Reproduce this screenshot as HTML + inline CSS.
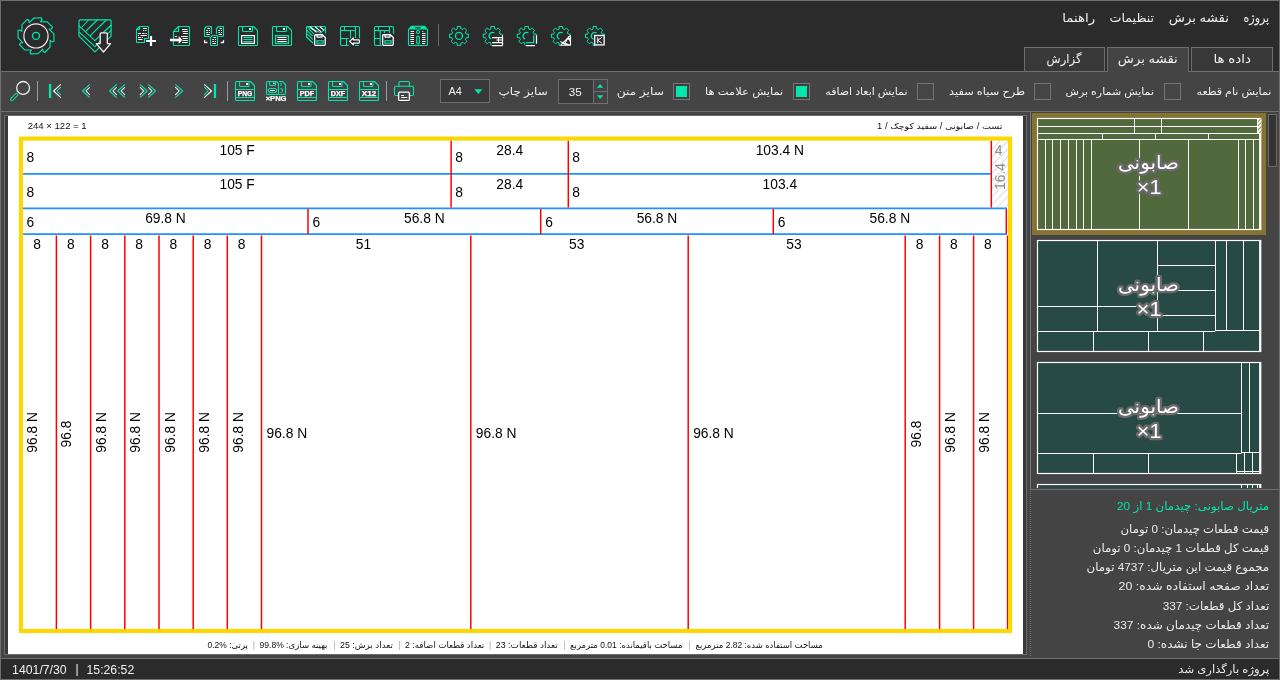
<!DOCTYPE html><html lang="fa" dir="ltr"><head><meta charset="utf-8"><title>نقشه برش</title><style>
*{box-sizing:border-box;margin:0;padding:0}
html,body{width:1280px;height:680px;overflow:hidden;background:#444444;}
body{position:relative;font-family:"Liberation Sans","DejaVu Sans",sans-serif;color:#eee;}
.abs{position:absolute}
svg{position:absolute;left:0;top:0;overflow:hidden;will-change:transform}
svg text{font-family:"Liberation Sans","DejaVu Sans",sans-serif}
#topbar{left:0;top:0;width:1280px;height:72px;background:#2b2b2b;border-bottom:1px solid #6f6f6f}
#toolbar{left:0;top:72px;width:1280px;height:40px;background:#444444;border-bottom:1px solid #6f6f6f}
#status{left:0;top:658px;width:1280px;height:22px;background:#2b2b2b;border-top:1px solid #6f6f6f}
#frame{left:0;top:0;width:1280px;height:680px;border:1px solid #6f6f6f;pointer-events:none;z-index:50}
.tab{top:47px;height:24px;border:1px solid #6f6f6f;border-bottom:none;background:#383838}
.tab.on{background:#444444;height:25px}
.cb{top:83px;width:17px;height:17px;border:1px solid #757575;background:#454545}
.cb.on{background:#3f3f3f}
.cb.on::after{content:"";position:absolute;left:2px;top:2px;width:11px;height:11px;background:#02e6ac}
.sep{width:1px;background:#9a9a9a}
.box{border:1px solid #6e6e6e;background:#393939}
#canvas{left:4px;top:115px;width:1023px;height:540px;background:#383838;border:1px solid #6a6a6a}
#white{left:8px;top:116px;width:1015px;height:538px;background:#fff}
#info{left:1031px;top:489px;width:249px;height:169px;background:#444444;border-top:1px solid #6f6f6f}
#split{left:1030px;top:489px;width:1px;height:167px;border-left:1px dotted #727272}
#split2{left:1030px;top:112px;width:1px;height:378px;background:#7c7c7c}
</style></head><body>
<div id="topbar" class="abs"></div>
<div id="toolbar" class="abs"></div>
<div class="abs tab" style="left:1191px;width:82px"></div>
<div class="abs tab on" style="left:1107px;width:82px"></div>
<div class="abs tab" style="left:1024px;width:81px"></div>
<div class="abs cb on" style="left:673px"></div>
<div class="abs cb on" style="left:793px"></div>
<div class="abs cb" style="left:917px"></div>
<div class="abs cb" style="left:1034px"></div>
<div class="abs cb" style="left:1164px"></div>
<div class="abs sep" style="left:37px;top:81px;height:20px"></div>
<div class="abs sep" style="left:227px;top:81px;height:20px"></div>
<div class="abs sep" style="left:386px;top:81px;height:20px"></div>
<div class="abs sep" style="left:438px;top:24px;height:22px;background:#6a6a6a"></div>
<div class="abs box" style="left:440px;top:79px;width:50px;height:24px"></div>
<svg style="left:474px;top:89px" width="9" height="6"><path d="M0.3 0.3h8L4.3 5z" fill="#02e6ac"/></svg>
<div class="abs box" style="left:558px;top:79px;width:50px;height:25px"></div>
<div class="abs" style="left:593px;top:80px;width:14px;height:23px;background:#444444;border-left:1px solid #6e6e6e"></div>
<div class="abs" style="left:593px;top:91px;width:14px;height:1px;background:#6e6e6e"></div>
<svg style="left:596px;top:83px" width="8" height="17"><path d="M1 4.8h6.2L4.1 1z M1 12.2h6.2L4.1 16z" fill="#02e6ac"/></svg>
<svg width="640" height="110" viewBox="0 0 640 110"><path d="M40.5 21.8 L47.3 21.9 L52.6 27.1 L51.6 28.7 L49.2 29.1 L53.9 33.9 L54.0 41.5 L52.1 41.8 L50.1 40.4 L50.0 47.2 L44.8 52.5 L43.2 51.5 L42.8 49.1 L38.0 53.8 L30.4 53.9 L30.1 52.0 L31.5 50.0 L24.7 49.9 L19.4 44.7 L20.4 43.1 L22.8 42.7 L18.1 37.9 L18.0 30.3 L19.9 30.0 L21.9 31.4 L22.0 24.6 L27.2 19.3 L28.8 20.3 L29.2 22.7 L34.0 18.0 L41.6 17.9 L41.9 19.8Z" stroke="#02e6ac" stroke-width="1.15" fill="none" stroke-linejoin="round" stroke-linecap="round" /><circle cx="36" cy="35.9" r="12.1" fill="none" stroke="#f6e8e8" stroke-width="1.2"/><circle cx="36" cy="35.9" r="3.5" fill="none" stroke="#02e6ac" stroke-width="1.4"/><path d="M80 19.9H110.1Q111.1 19.9 111.1 20.9V36.2L94.9 51.8L79 36.2V20.9Q79 19.9 80 19.9Z" stroke="#02e6ac" stroke-width="1.15" fill="none" stroke-linejoin="round" stroke-linecap="round" /><path d="M79 25.9L94.9 40.6L111.1 25.1" stroke="#02e6ac" stroke-width="1.1" fill="none" stroke-linejoin="round" stroke-linecap="round" /><path d="M79 31.8L94.9 46.7L111.1 30.3" stroke="#02e6ac" stroke-width="1.1" fill="none" stroke-linejoin="round" stroke-linecap="round" /><path d="M82 27L88.5 20 M86 31L97.2 20 M90.5 35.3L106.3 20 M103.7 32.2L111 25.3" stroke="#02e6ac" stroke-width="1.1" fill="none" stroke-linejoin="round" stroke-linecap="round" /><path d="M100.2 43.6V33.9Q100.2 32.9 101.2 32.9H106.3Q107.3 32.9 107.3 33.9V43.6H110.6L103.5 52L96.3 43.6Z" stroke="#f4f0f0" stroke-width="1.3" fill="#2b2b2b" stroke-linejoin="round" stroke-linecap="round" /><g transform="translate(136 26)"><path d="M3.5 0.5H11.9Q12.5 0.5 12.5 1.1V12.5H8.5V16.5H1.1Q0.5 16.5 0.5 15.9V3.5Z M3.5 0.5V3.5H0.5" stroke="#02e6ac" stroke-width="1.1" fill="none" stroke-linejoin="round" stroke-linecap="round" /><path d="M7 2.5H11 M7 4.5H8.3 M9.3 4.5H10.6 M2 7.5H5 M6 7.5H8.6 M9.5 7.5H10.8 M2 9.5H3 M4.6 9.5H10.8 M2 11.5H5 M6 11.5H7 M2 13.5H6.5" stroke="#f4f0f0" stroke-width="1.1" fill="none"/><path d="M15 10V20M10 15H20" stroke="#fff" stroke-width="2.2" fill="none"/></g><g transform="translate(170 26)"><path d="M8.5 0.5H18.9Q19.5 0.5 19.5 1.1V18.9Q19.5 19.5 18.9 19.5H4.1Q3.5 19.5 3.5 18.9V5.5Z M8.5 0.5V5.5H3.5" stroke="#02e6ac" stroke-width="1.1" fill="none" stroke-linejoin="round" stroke-linecap="round" /><path d="M12 3.5H17.5 M12.5 5.5H17.8 M13 7.5H17.8 M4.8 10.5H7 M11 10.5H17.8 M12.5 12.5H17.8 M12.5 14.5H17.8 M12 16.5H17.8" stroke="#f4f0f0" stroke-width="1.1" fill="none"/><path d="M0 12.8H8.6V10.4H9.2L12.2 14L9.2 17.6H8.6V15.2H0Z" fill="#fff"/></g><g transform="translate(204 26)"><path d="M2.5 0.5H6.9Q7.5 0.5 7.5 1.1V9.9Q7.5 10.5 6.9 10.5H1.1Q0.5 10.5 0.5 9.9V2.5Z" stroke="#02e6ac" stroke-width="1.1" fill="none" stroke-linejoin="round" stroke-linecap="round" /><path d="M3.5 2.5H5.9 M2.3 4.5H4.0 M4.8 4.5H6.0 M2.3 6.5H4.0 M4.8 6.5H6.0 M2.3 8.5H6.0" stroke="#f4f0f0" stroke-width="1.1" fill="none"/><path d="M14.5 0.5H18.9Q19.5 0.5 19.5 1.1V9.9Q19.5 10.5 18.9 10.5H13.1Q12.5 10.5 12.5 9.9V2.5Z" stroke="#02e6ac" stroke-width="1.1" fill="none" stroke-linejoin="round" stroke-linecap="round" /><path d="M15.5 2.5H17.9 M14.3 4.5H16.0 M16.8 4.5H18.0 M14.3 6.5H16.0 M16.8 6.5H18.0 M14.3 8.5H18.0" stroke="#f4f0f0" stroke-width="1.1" fill="none"/><rect x="5.8" y="8.2" width="8.6" height="11.8" fill="#2b2b2b"/><path d="M8.5 9.5H12.9Q13.5 9.5 13.5 10.1V18.9Q13.5 19.5 12.9 19.5H7.1Q6.5 19.5 6.5 18.9V11.5Z" stroke="#02e6ac" stroke-width="1.1" fill="none" stroke-linejoin="round" stroke-linecap="round" /><path d="M9.5 11.5H11.9 M8.3 13.5H10.0 M10.8 13.5H12.0 M8.3 15.5H10.0 M10.8 15.5H12.0 M8.3 17.5H12.0" stroke="#f4f0f0" stroke-width="1.1" fill="none"/><path d="M0.6 14.2V16.5H3.4 M19.5 14.2V16.5H16.7" stroke="#fff" stroke-width="1.3" fill="none" stroke-linejoin="round" stroke-linecap="butt" /></g><g transform="translate(238 26)"><path d="M1.5 0.5H15.5L19.5 4.5V18.5Q19.5 19.5 18.5 19.5H1.5Q0.5 19.5 0.5 18.5V1.5Q0.5 0.5 1.5 0.5Z" stroke="#02e6ac" stroke-width="1.1" fill="none" stroke-linejoin="round" stroke-linecap="round" /><path d="M4.5 0.5V4.5Q4.5 5.5 5.5 5.5H13.5Q14.5 5.5 14.5 4.5V0.5" stroke="#02e6ac" stroke-width="1.1" fill="none" stroke-linejoin="round" stroke-linecap="round" /><rect x="11" y="2" width="2" height="2" fill="#fff"/><rect x="3.6" y="9.6" width="12.8" height="7.7" fill="none" stroke="#fff" stroke-width="1.25"/><path d="M5.4 11.5H14.6 M5.4 13.5H14.6 M5.4 15.5H14.6" stroke="#02e6ac" stroke-width="1.05" fill="none"/></g><g transform="translate(272 26)"><path d="M1.5 0.5H15.5L19.5 4.5V18.5Q19.5 19.5 18.5 19.5H1.5Q0.5 19.5 0.5 18.5V1.5Q0.5 0.5 1.5 0.5Z" stroke="#02e6ac" stroke-width="1.1" fill="none" stroke-linejoin="round" stroke-linecap="round" /><path d="M4.5 0.5V4.5Q4.5 5.5 5.5 5.5H13.5Q14.5 5.5 14.5 4.5V0.5" stroke="#02e6ac" stroke-width="1.1" fill="none" stroke-linejoin="round" stroke-linecap="round" /><rect x="11" y="2" width="2" height="2" fill="#fff"/><rect x="3.6" y="9.6" width="12.8" height="7.7" fill="none" stroke="#02e6ac" stroke-width="1.25"/><path d="M5.4 11.5H14.6 M5.4 13.5H14.6 M5.4 15.5H14.6" stroke="#fff" stroke-width="1.05" fill="none"/></g><g transform="translate(306 26)"><path d="M1.5 0.5H18.5Q19.5 0.5 19.5 1.5V7 M0.5 1.5V11L7 17 M0.5 1.5Q0.5 0.5 1.5 0.5" stroke="#02e6ac" stroke-width="1.1" fill="none" stroke-linejoin="round" stroke-linecap="round" /><path d="M0.8 0.8L15 7L19.2 2.8" stroke="#02e6ac" stroke-width="1.05" fill="none" stroke-linejoin="round" stroke-linecap="round" /><path d="M4.5 1L10.3 6 M9.4 1L14.8 5.6 M14.2 1L17.5 3.9" stroke="#fff" stroke-width="1.15" fill="none" stroke-linejoin="round" stroke-linecap="round" /><path d="M0.8 4.3L6.5 9.8 M0.8 7.6L6.5 13.1 M3 3.2L7.7 7.6" stroke="#02e6ac" stroke-width="1.05" fill="none" stroke-linejoin="round" stroke-linecap="round" /><path d="M9.65 8.75H16.45L19.25 11.55V18.35Q19.25 19.35 18.25 19.35H9.65Q8.65 19.35 8.65 18.35V9.75Q8.65 8.75 9.65 8.75Z" stroke="#fff" stroke-width="1.3" fill="#2b2b2b" stroke-linejoin="round" stroke-linecap="round" /><path d="M11.05 8.75V11.05H16.05V8.75" stroke="#fff" stroke-width="1.2" fill="none" stroke-linejoin="round" stroke-linecap="round" /><rect x="10.850000000000001" y="14.75" width="6.3" height="2.4" fill="none" stroke="#02e6ac" stroke-width="1.15"/></g><g transform="translate(340 26)"><path d="M2 0.5H18Q19.5 0.5 19.5 2V18Q19.5 19.5 18 19.5H2Q0.5 19.5 0.5 18V2Q0.5 0.5 2 0.5Z" stroke="#02e6ac" stroke-width="1.1" fill="none" stroke-linejoin="round" stroke-linecap="round" /><path d="M0.5 4.5H15.5 M4.5 0.5V4.5 M15.5 0.5V11.5 M0.5 12.5H10.5 M10.5 4.5V12.5 M6.5 12.5V19.5" stroke="#02e6ac" stroke-width="1.1" fill="none" stroke-linejoin="round" stroke-linecap="round" /><rect x="8.6" y="12.2" width="12" height="8.2" fill="#2b2b2b"/><path d="M15.3 19.5H18.6" stroke="#02e6ac" stroke-width="1.1" fill="none" stroke-linejoin="round" stroke-linecap="round" /><path d="M9.7 15.4L13.3 11.9V13.8H18.6Q19.4 13.8 19.4 14.6V16.2Q19.4 17 18.6 17H13.3V18.9Z" stroke="#fff" stroke-width="1.25" fill="#2b2b2b" stroke-linejoin="round" stroke-linecap="round" /></g><g transform="translate(374 26)"><path d="M2 0.5H18Q19.5 0.5 19.5 2V18Q19.5 19.5 18 19.5H2Q0.5 19.5 0.5 18V2Q0.5 0.5 2 0.5Z" stroke="#02e6ac" stroke-width="1.1" fill="none" stroke-linejoin="round" stroke-linecap="round" /><path d="M0.5 4.5H15.5 M4.5 0.5V4.5 M15.5 0.5V6.6 M0.5 12.5H6.3 M10.4 4.5V6.6 M6.3 4.5V19.5" stroke="#02e6ac" stroke-width="1.1" fill="none" stroke-linejoin="round" stroke-linecap="round" /><rect x="7.8" y="7.9" width="13" height="13" fill="#2b2b2b"/><path d="M9.65 8.75H16.45L19.25 11.55V18.35Q19.25 19.35 18.25 19.35H9.65Q8.65 19.35 8.65 18.35V9.75Q8.65 8.75 9.65 8.75Z" stroke="#fff" stroke-width="1.3" fill="#2b2b2b" stroke-linejoin="round" stroke-linecap="round" /><path d="M11.05 8.75V11.05H16.05V8.75" stroke="#fff" stroke-width="1.2" fill="none" stroke-linejoin="round" stroke-linecap="round" /><rect x="10.850000000000001" y="14.75" width="6.3" height="2.4" fill="none" stroke="#02e6ac" stroke-width="1.15"/></g><g transform="translate(408 26)"><path d="M3.4 0.2H16.6L19.5 3.5V18.4Q19.5 19.5 18.4 19.5H1.6Q0.5 19.5 0.5 18.4V3.5Z" stroke="#02e6ac" stroke-width="1.1" fill="none" stroke-linejoin="round" stroke-linecap="round" /><path d="M3.4 0.2H16.6L19.5 3.5H0.5Z" fill="#02e6ac"/><rect x="7" y="1.2" width="6" height="1.3" rx="0.65" fill="#2b2b2b"/><path d="M2.6 5.5H6 M2.3 7.5H6 M2.3 9.5H6 M2.3 11.5H6 M2.3 13.5H6 M2.3 15.5H6 M2.8 17.5H6 M14.3 5.5H15.3 M14 7.5H17.6 M14 9.5H17.6 M14 11.5H17.6 M14 13.5H17.6 M14 15.5H17.6 M14 17.5H17.2" stroke="#f4f0f0" stroke-width="1.1" fill="none"/><circle cx="10" cy="6" r="1.5" fill="none" stroke="#02e6ac" stroke-width="1.15"/><rect x="8.7" y="10.1" width="2.6" height="7.8" rx="1.3" fill="none" stroke="#02e6ac" stroke-width="1.15"/></g><g transform="translate(449 26)"><path d="M8.21 2.72 L8.17 0.48 L11.83 0.48 L11.79 2.72 L13.81 3.56 L15.37 1.94 L17.96 4.53 L16.34 6.09 L17.18 8.11 L19.42 8.07 L19.42 11.73 L17.18 11.69 L16.34 13.71 L17.96 15.27 L15.37 17.86 L13.81 16.24 L11.79 17.08 L11.83 19.32 L8.17 19.32 L8.21 17.08 L6.19 16.24 L4.63 17.86 L2.04 15.27 L3.66 13.71 L2.82 11.69 L0.58 11.73 L0.58 8.07 L2.82 8.11 L3.66 6.09 L2.04 4.53 L4.63 1.94 L6.19 3.56Z" stroke="#02e6ac" stroke-width="1.0" fill="none" stroke-linejoin="round" stroke-linecap="round" /><circle cx="10" cy="9.9" r="3.5" fill="none" stroke="#02e6ac" stroke-width="1.3"/></g><g transform="translate(483 26)"><path d="M7.91 2.72 L7.87 0.48 L11.53 0.48 L11.49 2.72 L13.51 3.56 L15.07 1.94 L17.66 4.53 L16.04 6.09 L16.88 8.11 L19.12 8.07 L19.12 11.73 L16.88 11.69 L16.04 13.71 L17.66 15.27 L15.07 17.86 L13.51 16.24 L11.49 17.08 L11.53 19.32 L7.87 19.32 L7.91 17.08 L5.89 16.24 L4.33 17.86 L1.74 15.27 L3.36 13.71 L2.52 11.69 L0.28 11.73 L0.28 8.07 L2.52 8.11 L3.36 6.09 L1.74 4.53 L4.33 1.94 L5.89 3.56Z" stroke="#02e6ac" stroke-width="1.0" fill="none" stroke-linejoin="round" stroke-linecap="round" /><path d="M7.69 12.77A3.5 3.5 0 0 1 10.90 6.61" stroke="#02e6ac" stroke-width="1.3" fill="none" stroke-linejoin="round" stroke-linecap="round" /><rect x="8.8" y="9" width="11.5" height="11.5" fill="#2b2b2b"/><path d="M9 11.5H20 M9 16.5H20 M9 19.5H19.5 M19.5 9.3V19.5" stroke="#fff" stroke-width="1.25" fill="none" stroke-linejoin="round" stroke-linecap="butt" /><path d="M15.5 11.5V16.5 M13.3 14H19.5" stroke="#fff" stroke-width="1.0" fill="none" stroke-linejoin="round" stroke-linecap="butt" /></g><g transform="translate(517 26)"><path d="M7.91 2.72 L7.87 0.48 L11.53 0.48 L11.49 2.72 L13.51 3.56 L15.07 1.94 L17.66 4.53 L16.04 6.09 L16.88 8.11 L19.12 8.07 L19.12 11.73 L16.88 11.69 L16.04 13.71 L17.66 15.27 L15.07 17.86 L13.51 16.24 L11.49 17.08 L11.53 19.32 L7.87 19.32 L7.91 17.08 L5.89 16.24 L4.33 17.86 L1.74 15.27 L3.36 13.71 L2.52 11.69 L0.28 11.73 L0.28 8.07 L2.52 8.11 L3.36 6.09 L1.74 4.53 L4.33 1.94 L5.89 3.56Z" stroke="#02e6ac" stroke-width="1.0" fill="none" stroke-linejoin="round" stroke-linecap="round" /><path d="M7.69 12.77A3.5 3.5 0 0 1 10.90 6.61" stroke="#02e6ac" stroke-width="1.3" fill="none" stroke-linejoin="round" stroke-linecap="round" /><rect x="8.6" y="9" width="12.5" height="11.5" fill="#2b2b2b"/><path d="M9 16.5H16.75V9.3" stroke="#02e6ac" stroke-width="1.25" fill="none" stroke-linejoin="miter" stroke-linecap="butt" /><path d="M9 19.5H18 M19.5 9.3V17.8" stroke="#fff" stroke-width="1.25" fill="none" stroke-linejoin="round" stroke-linecap="butt" /></g><g transform="translate(551 26)"><path d="M8.11 2.72 L8.07 0.48 L11.73 0.48 L11.69 2.72 L13.71 3.56 L15.27 1.94 L17.86 4.53 L16.24 6.09 L17.08 8.11 L19.32 8.07 L19.32 11.73 L17.08 11.69 L16.24 13.71 L17.86 15.27 L15.27 17.86 L13.71 16.24 L11.69 17.08 L11.73 19.32 L8.07 19.32 L8.11 17.08 L6.09 16.24 L4.53 17.86 L1.94 15.27 L3.56 13.71 L2.72 11.69 L0.48 11.73 L0.48 8.07 L2.72 8.11 L3.56 6.09 L1.94 4.53 L4.53 1.94 L6.09 3.56Z" stroke="#02e6ac" stroke-width="1.0" fill="none" stroke-linejoin="round" stroke-linecap="round" /><path d="M7.89 12.77A3.5 3.5 0 0 1 11.10 6.61" stroke="#02e6ac" stroke-width="1.3" fill="none" stroke-linejoin="round" stroke-linecap="round" /><path d="M9 20.3V15L19.4 8.4H20.4V20.3Z" fill="#2b2b2b"/><path d="M9.6 19.2H19.5V9.3L9.6 19.2 M9.6 15.8L19.5 19.2 M13 19.2L17.5 10.8L19.5 16 M15.5 13L19.5 13.5 M11.5 17L17 19" stroke="#fff" stroke-width="1.1" fill="none" stroke-linejoin="round" stroke-linecap="round" /></g><g transform="translate(585 26)"><path d="M8.11 2.72 L8.07 0.48 L11.73 0.48 L11.69 2.72 L13.71 3.56 L15.27 1.94 L17.86 4.53 L16.24 6.09 L17.08 8.11 L19.32 8.07 L19.32 11.73 L17.08 11.69 L16.24 13.71 L17.86 15.27 L15.27 17.86 L13.71 16.24 L11.69 17.08 L11.73 19.32 L8.07 19.32 L8.11 17.08 L6.09 16.24 L4.53 17.86 L1.94 15.27 L3.56 13.71 L2.72 11.69 L0.48 11.73 L0.48 8.07 L2.72 8.11 L3.56 6.09 L1.94 4.53 L4.53 1.94 L6.09 3.56Z" stroke="#02e6ac" stroke-width="1.0" fill="none" stroke-linejoin="round" stroke-linecap="round" /><path d="M7.89 12.77A3.5 3.5 0 0 1 11.10 6.61" stroke="#02e6ac" stroke-width="1.3" fill="none" stroke-linejoin="round" stroke-linecap="round" /><rect x="9.7" y="9.5" width="9.4" height="9.4" fill="#2b2b2b" stroke="#fff" stroke-width="1.3"/><path d="M12.7 11.7V16.9 M16.3 11.7L12.9 14.4L16.5 16.9" stroke="#fff" stroke-width="1.0" fill="none" stroke-linejoin="round" stroke-linecap="round" /></g><circle cx="23.1" cy="87.9" r="6.4" fill="none" stroke="#f0eeee" stroke-width="1.3"/><rect x="-1.35" y="-4.6" width="2.7" height="9.2" rx="1.35" fill="none" stroke="#02e6ac" stroke-width="1.05" transform="translate(14.2 97) rotate(45)"/><rect x="48.9" y="84" width="2.3" height="14" fill="#02e6ac"/><path d="M60.6 84.7L53.6 91L60.6 97.3" stroke="#fff" stroke-width="1.05" fill="none" stroke-linejoin="round" stroke-linecap="round" /><path d="M60.6 87.3L57.0 91L60.6 94.7" stroke="#02e6ac" stroke-width="1.05" fill="none" stroke-linejoin="round" stroke-linecap="round" /><path d="M89.6 84.7L82.6 91L89.6 97.3" stroke="#02e6ac" stroke-width="1.05" fill="none" stroke-linejoin="round" stroke-linecap="round" /><path d="M89.6 87.3L86.0 91L89.6 94.7" stroke="#fff" stroke-width="1.05" fill="none" stroke-linejoin="round" stroke-linecap="round" /><path d="M116.5 84.7L109.5 91L116.5 97.3" stroke="#02e6ac" stroke-width="1.05" fill="none" stroke-linejoin="round" stroke-linecap="round" /><path d="M116.5 87.3L112.9 91L116.5 94.7" stroke="#fff" stroke-width="1.05" fill="none" stroke-linejoin="round" stroke-linecap="round" /><path d="M124.7 84.7L117.7 91L124.7 97.3" stroke="#02e6ac" stroke-width="1.05" fill="none" stroke-linejoin="round" stroke-linecap="round" /><path d="M124.7 87.3L121.10000000000001 91L124.7 94.7" stroke="#fff" stroke-width="1.05" fill="none" stroke-linejoin="round" stroke-linecap="round" /><path d="M140.2 84.7L147.2 91L140.2 97.3" stroke="#02e6ac" stroke-width="1.05" fill="none" stroke-linejoin="round" stroke-linecap="round" /><path d="M140.2 87.3L143.79999999999998 91L140.2 94.7" stroke="#fff" stroke-width="1.05" fill="none" stroke-linejoin="round" stroke-linecap="round" /><path d="M148.5 84.7L155.5 91L148.5 97.3" stroke="#02e6ac" stroke-width="1.05" fill="none" stroke-linejoin="round" stroke-linecap="round" /><path d="M148.5 87.3L152.1 91L148.5 94.7" stroke="#fff" stroke-width="1.05" fill="none" stroke-linejoin="round" stroke-linecap="round" /><path d="M175.6 84.7L182.6 91L175.6 97.3" stroke="#02e6ac" stroke-width="1.05" fill="none" stroke-linejoin="round" stroke-linecap="round" /><path d="M175.6 87.3L179.2 91L175.6 94.7" stroke="#fff" stroke-width="1.05" fill="none" stroke-linejoin="round" stroke-linecap="round" /><path d="M204.5 84.7L211.5 91L204.5 97.3" stroke="#fff" stroke-width="1.05" fill="none" stroke-linejoin="round" stroke-linecap="round" /><path d="M204.5 87.3L208.1 91L204.5 94.7" stroke="#02e6ac" stroke-width="1.05" fill="none" stroke-linejoin="round" stroke-linecap="round" /><rect x="213.8" y="84" width="2.3" height="14" fill="#02e6ac"/><g transform="translate(235 81)"><path d="M1.5 0.5H15.5L19.5 4.5V18.5Q19.5 19.5 18.5 19.5H1.5Q0.5 19.5 0.5 18.5V1.5Q0.5 0.5 1.5 0.5Z" stroke="#02e6ac" stroke-width="1.1" fill="none" stroke-linejoin="round" stroke-linecap="round" /><path d="M4.5 0.5V4.5Q4.5 5.5 5.5 5.5H13Q14 5.5 14 4.5V0.5" stroke="#02e6ac" stroke-width="1.1" fill="none" stroke-linejoin="round" stroke-linecap="round" /><rect x="11" y="2" width="2" height="2" fill="#fff"/><path d="M0.5 8.5H19.5 M0.5 16.5H19.5" stroke="#02e6ac" stroke-width="1.1" fill="none" stroke-linejoin="round" stroke-linecap="round" /><text x="10" y="15.1" font-size="7.3" font-weight="bold" text-anchor="middle" fill="#fff" stroke="#fff" stroke-width="0.25" textLength="14.6" lengthAdjust="spacingAndGlyphs">PNG</text></g><g transform="translate(297 81)"><path d="M1.5 0.5H15.5L19.5 4.5V18.5Q19.5 19.5 18.5 19.5H1.5Q0.5 19.5 0.5 18.5V1.5Q0.5 0.5 1.5 0.5Z" stroke="#02e6ac" stroke-width="1.1" fill="none" stroke-linejoin="round" stroke-linecap="round" /><path d="M4.5 0.5V4.5Q4.5 5.5 5.5 5.5H13Q14 5.5 14 4.5V0.5" stroke="#02e6ac" stroke-width="1.1" fill="none" stroke-linejoin="round" stroke-linecap="round" /><rect x="11" y="2" width="2" height="2" fill="#fff"/><path d="M0.5 8.5H19.5 M0.5 16.5H19.5" stroke="#02e6ac" stroke-width="1.1" fill="none" stroke-linejoin="round" stroke-linecap="round" /><text x="10" y="15.1" font-size="7.3" font-weight="bold" text-anchor="middle" fill="#fff" stroke="#fff" stroke-width="0.25" textLength="14.6" lengthAdjust="spacingAndGlyphs">PDF</text></g><g transform="translate(328 81)"><path d="M1.5 0.5H15.5L19.5 4.5V18.5Q19.5 19.5 18.5 19.5H1.5Q0.5 19.5 0.5 18.5V1.5Q0.5 0.5 1.5 0.5Z" stroke="#02e6ac" stroke-width="1.1" fill="none" stroke-linejoin="round" stroke-linecap="round" /><path d="M4.5 0.5V4.5Q4.5 5.5 5.5 5.5H13Q14 5.5 14 4.5V0.5" stroke="#02e6ac" stroke-width="1.1" fill="none" stroke-linejoin="round" stroke-linecap="round" /><rect x="11" y="2" width="2" height="2" fill="#fff"/><path d="M0.5 8.5H19.5 M0.5 16.5H19.5" stroke="#02e6ac" stroke-width="1.1" fill="none" stroke-linejoin="round" stroke-linecap="round" /><text x="10" y="15.1" font-size="7.3" font-weight="bold" text-anchor="middle" fill="#fff" stroke="#fff" stroke-width="0.25" textLength="14.6" lengthAdjust="spacingAndGlyphs">DXF</text></g><g transform="translate(359 81)"><path d="M1.5 0.5H15.5L19.5 4.5V18.5Q19.5 19.5 18.5 19.5H1.5Q0.5 19.5 0.5 18.5V1.5Q0.5 0.5 1.5 0.5Z" stroke="#02e6ac" stroke-width="1.1" fill="none" stroke-linejoin="round" stroke-linecap="round" /><path d="M4.5 0.5V4.5Q4.5 5.5 5.5 5.5H13Q14 5.5 14 4.5V0.5" stroke="#02e6ac" stroke-width="1.1" fill="none" stroke-linejoin="round" stroke-linecap="round" /><rect x="11" y="2" width="2" height="2" fill="#fff"/><path d="M0.5 8.5H19.5 M0.5 16.5H19.5" stroke="#02e6ac" stroke-width="1.1" fill="none" stroke-linejoin="round" stroke-linecap="round" /><text x="10" y="15.1" font-size="7.3" font-weight="bold" text-anchor="middle" fill="#fff" stroke="#fff" stroke-width="0.25" textLength="14.6" lengthAdjust="spacingAndGlyphs">X12</text></g><g transform="translate(265 81)"><path d="M14.5 0.5H17.5L20.5 3.5V12.5Q20.5 13.5 19.5 13.5H14.5" stroke="#02e6ac" stroke-width="1.1" fill="none" stroke-linejoin="round" stroke-linecap="round" /><path d="M15.8 2L16.4 3.6L15.8 4.6 M15.8 7.5Q18 8.2 17.6 10Q17.4 11.2 15.8 11.4" stroke="#02e6ac" stroke-width="1.05" fill="none" stroke-linejoin="round" stroke-linecap="round" /><path d="M2.5 0.5H11.5L13.5 2.5V12.5Q13.5 13.5 12.5 13.5H2.5Q1.5 13.5 1.5 12.5V1.5Q1.5 0.5 2.5 0.5Z" stroke="#02e6ac" stroke-width="1.1" fill="#444444" stroke-linejoin="round" stroke-linecap="round" /><path d="M4.5 0.5V3.5Q4.5 4.5 5.5 4.5H9.5Q10.5 4.5 10.5 3.5V0.5" stroke="#02e6ac" stroke-width="1.1" fill="none" stroke-linejoin="round" stroke-linecap="round" /><rect x="8" y="1.6" width="1.5" height="1.5" fill="#fff"/><rect x="3.4" y="7.5" width="8.2" height="4" rx="2" fill="none" stroke="#02e6ac" stroke-width="1.15"/><path d="M5 9.5H10" stroke="#fff" stroke-width="1.1"/><text x="0.7" y="19.7" font-size="6.9" font-weight="bold" fill="#fff" stroke="#fff" stroke-width="0.2" textLength="20.8" lengthAdjust="spacingAndGlyphs">×PNG</text></g><g transform="translate(394 81)"><path d="M5 5.3V1.5Q5 0.5 6 0.5H14.5Q15.5 0.5 15.5 1.5V5.3" stroke="#02e6ac" stroke-width="1.1" fill="none" stroke-linejoin="round" stroke-linecap="round" /><path d="M4 14.5H2Q0.5 14.5 0.5 13V6.8Q0.5 5.3 2 5.3H18Q19.5 5.3 19.5 6.8V13Q19.5 14.5 18 14.5H16" stroke="#02e6ac" stroke-width="1.1" fill="none" stroke-linejoin="round" stroke-linecap="round" /><rect x="4.6" y="11.2" width="10.8" height="8.2" rx="1.2" fill="#444444" stroke="#fff" stroke-width="1.3"/><path d="M7.2 14.5H10 M7.2 16.5H13.2" stroke="#fff" stroke-width="1.1"/></g></svg>
<div id="canvas" class="abs"></div><div id="white" class="abs"></div>
<svg style="left:8px;top:116px" width="1015" height="538" viewBox="8 116 1015 538"><defs><pattern id="hatch" width="5.6" height="5.6" patternUnits="userSpaceOnUse" patternTransform="rotate(45)"><line x1="0" y1="0" x2="0" y2="5.6" stroke="#bcb6b6" stroke-width="1"/></pattern></defs><rect x="992" y="141" width="16" height="66.5" fill="url(#hatch)"/><line x1="23" y1="173.8" x2="991" y2="173.8" stroke="#1e90ff" stroke-width="1.8"/><line x1="23" y1="208.4" x2="1007" y2="208.4" stroke="#1e90ff" stroke-width="1.8"/><line x1="23" y1="234.1" x2="1007" y2="234.1" stroke="#1e90ff" stroke-width="1.8"/><line x1="451.1" y1="140.5" x2="451.1" y2="207.5" stroke="#ff0000" stroke-width="1.5"/><line x1="568.3" y1="140.5" x2="568.3" y2="207.5" stroke="#ff0000" stroke-width="1.5"/><line x1="991.3" y1="140.5" x2="991.3" y2="207.5" stroke="#ff0000" stroke-width="1.5"/><line x1="308" y1="209" x2="308" y2="234" stroke="#ff0000" stroke-width="1.5"/><line x1="540.7" y1="209" x2="540.7" y2="234" stroke="#ff0000" stroke-width="1.5"/><line x1="773.3" y1="209" x2="773.3" y2="234" stroke="#ff0000" stroke-width="1.5"/><line x1="1006.3" y1="209" x2="1006.3" y2="234" stroke="#ff0000" stroke-width="1.5"/><line x1="56.4" y1="235.5" x2="56.4" y2="629" stroke="#ff0000" stroke-width="1.5"/><line x1="90.6" y1="235.5" x2="90.6" y2="629" stroke="#ff0000" stroke-width="1.5"/><line x1="124.8" y1="235.5" x2="124.8" y2="629" stroke="#ff0000" stroke-width="1.5"/><line x1="159" y1="235.5" x2="159" y2="629" stroke="#ff0000" stroke-width="1.5"/><line x1="193.2" y1="235.5" x2="193.2" y2="629" stroke="#ff0000" stroke-width="1.5"/><line x1="227.3" y1="235.5" x2="227.3" y2="629" stroke="#ff0000" stroke-width="1.5"/><line x1="261.5" y1="235.5" x2="261.5" y2="629" stroke="#ff0000" stroke-width="1.5"/><line x1="470.8" y1="235.5" x2="470.8" y2="629" stroke="#ff0000" stroke-width="1.5"/><line x1="688.2" y1="235.5" x2="688.2" y2="629" stroke="#ff0000" stroke-width="1.5"/><line x1="905.2" y1="235.5" x2="905.2" y2="629" stroke="#ff0000" stroke-width="1.5"/><line x1="939.6" y1="235.5" x2="939.6" y2="629" stroke="#ff0000" stroke-width="1.5"/><line x1="973.6" y1="235.5" x2="973.6" y2="629" stroke="#ff0000" stroke-width="1.5"/><line x1="1007.6" y1="235.5" x2="1007.6" y2="629" stroke="#ff0000" stroke-width="1.5"/><rect x="21" y="138.6" width="989.1" height="492.4" fill="none" stroke="#ffd700" stroke-width="4.1"/><text x="237.15" y="155" font-size="13.8" text-anchor="middle" fill="#000">105 F</text><text x="26.5" y="162" font-size="13.8" text-anchor="start" fill="#000">8</text><text x="509.79999999999995" y="155" font-size="13.8" text-anchor="middle" fill="#000">28.4</text><text x="455.3" y="162" font-size="13.8" text-anchor="start" fill="#000">8</text><text x="779.8" y="155" font-size="13.8" text-anchor="middle" fill="#000">103.4 N</text><text x="572.3" y="162" font-size="13.8" text-anchor="start" fill="#000">8</text><text x="237.15" y="189" font-size="13.8" text-anchor="middle" fill="#000">105 F</text><text x="26.5" y="196.5" font-size="13.8" text-anchor="start" fill="#000">8</text><text x="509.79999999999995" y="189" font-size="13.8" text-anchor="middle" fill="#000">28.4</text><text x="455.3" y="196.5" font-size="13.8" text-anchor="start" fill="#000">8</text><text x="779.8" y="189" font-size="13.8" text-anchor="middle" fill="#000">103.4</text><text x="572.3" y="196.5" font-size="13.8" text-anchor="start" fill="#000">8</text><text x="165.5" y="223.2" font-size="13.8" text-anchor="middle" fill="#000">69.8 N</text><text x="26.5" y="227" font-size="13.8" text-anchor="start" fill="#000">6</text><text x="424.35" y="223.2" font-size="13.8" text-anchor="middle" fill="#000">56.8 N</text><text x="312.5" y="227" font-size="13.8" text-anchor="start" fill="#000">6</text><text x="657.0" y="223.2" font-size="13.8" text-anchor="middle" fill="#000">56.8 N</text><text x="545.2" y="227" font-size="13.8" text-anchor="start" fill="#000">6</text><text x="889.8" y="223.2" font-size="13.8" text-anchor="middle" fill="#000">56.8 N</text><text x="777.8" y="227" font-size="13.8" text-anchor="start" fill="#000">6</text><text x="37.0" y="249" font-size="13.8" text-anchor="middle" fill="#000">8</text><text x="37.4" y="432.3" font-size="13.8" text-anchor="middle" fill="#000" transform="rotate(-90 37.4 432.3)">96.8 N</text><text x="70.8" y="249" font-size="13.8" text-anchor="middle" fill="#000">8</text><text x="71.4" y="434" font-size="13.8" text-anchor="middle" fill="#000" transform="rotate(-90 71.4 434)">96.8</text><text x="104.99999999999999" y="249" font-size="13.8" text-anchor="middle" fill="#000">8</text><text x="106.19999999999999" y="432.3" font-size="13.8" text-anchor="middle" fill="#000" transform="rotate(-90 106.19999999999999 432.3)">96.8 N</text><text x="139.20000000000002" y="249" font-size="13.8" text-anchor="middle" fill="#000">8</text><text x="140.4" y="432.3" font-size="13.8" text-anchor="middle" fill="#000" transform="rotate(-90 140.4 432.3)">96.8 N</text><text x="173.4" y="249" font-size="13.8" text-anchor="middle" fill="#000">8</text><text x="174.6" y="432.3" font-size="13.8" text-anchor="middle" fill="#000" transform="rotate(-90 174.6 432.3)">96.8 N</text><text x="207.55" y="249" font-size="13.8" text-anchor="middle" fill="#000">8</text><text x="208.79999999999998" y="432.3" font-size="13.8" text-anchor="middle" fill="#000" transform="rotate(-90 208.79999999999998 432.3)">96.8 N</text><text x="241.70000000000002" y="249" font-size="13.8" text-anchor="middle" fill="#000">8</text><text x="242.9" y="432.3" font-size="13.8" text-anchor="middle" fill="#000" transform="rotate(-90 242.9 432.3)">96.8 N</text><text x="363.45" y="249" font-size="13.8" text-anchor="middle" fill="#000">51</text><text x="266.5" y="438" font-size="13.8" text-anchor="start" fill="#000">96.8 N</text><text x="576.8" y="249" font-size="13.8" text-anchor="middle" fill="#000">53</text><text x="475.8" y="438" font-size="13.8" text-anchor="start" fill="#000">96.8 N</text><text x="794.0" y="249" font-size="13.8" text-anchor="middle" fill="#000">53</text><text x="693.2" y="438" font-size="13.8" text-anchor="start" fill="#000">96.8 N</text><text x="919.7" y="249" font-size="13.8" text-anchor="middle" fill="#000">8</text><text x="921.1" y="434" font-size="13.8" text-anchor="middle" fill="#000" transform="rotate(-90 921.1 434)">96.8</text><text x="953.9" y="249" font-size="13.8" text-anchor="middle" fill="#000">8</text><text x="955.4" y="432.3" font-size="13.8" text-anchor="middle" fill="#000" transform="rotate(-90 955.4 432.3)">96.8 N</text><text x="987.9" y="249" font-size="13.8" text-anchor="middle" fill="#000">8</text><text x="989.4" y="432.3" font-size="13.8" text-anchor="middle" fill="#000" transform="rotate(-90 989.4 432.3)">96.8 N</text><text x="998.5" y="155" font-size="13.8" text-anchor="middle" fill="#8c8c8c">4</text><text x="1005" y="176.5" font-size="13.8" text-anchor="middle" fill="#8c8c8c" transform="rotate(-90 1005 176.5)">16.4</text></svg>
<svg style="left:1031px;top:112px" width="249" height="376" viewBox="1031 112 249 376"><rect x="1032" y="113" width="234" height="122" fill="#857332"/><rect x="1037.5" y="118.5" width="223" height="111" fill="#52683d" stroke="#ffffff" stroke-width="1.2"/><line x1="1260.2" y1="118.0" x2="1260.2" y2="230.0" stroke="#ffffff" stroke-width="2.2"/><defs><pattern id="h2" width="3" height="3" patternUnits="userSpaceOnUse" patternTransform="rotate(45)"><rect width="3" height="3" fill="#fff"/><line x1="0" y1="0" x2="0" y2="3" stroke="#857332" stroke-width="1.6"/></pattern></defs><rect x="1257.7" y="118.5" width="3.6" height="15" fill="url(#h2)"/><line x1="1038.0" y1="126.5" x2="1257.7" y2="126.5" stroke="#ffffff" stroke-width="1.0"/><line x1="1038.0" y1="133.5" x2="1261.0" y2="133.5" stroke="#ffffff" stroke-width="1.0"/><line x1="1038.0" y1="139.5" x2="1261.0" y2="139.5" stroke="#ffffff" stroke-width="1.0"/><line x1="1134.5" y1="118.0" x2="1134.5" y2="133.3" stroke="#ffffff" stroke-width="1.0"/><line x1="1161.5" y1="118.0" x2="1161.5" y2="133.3" stroke="#ffffff" stroke-width="1.0"/><line x1="1257.5" y1="118.0" x2="1257.5" y2="133.3" stroke="#ffffff" stroke-width="1.0"/><line x1="1102.5" y1="133.3" x2="1102.5" y2="139.4" stroke="#ffffff" stroke-width="1.0"/><line x1="1155.5" y1="133.3" x2="1155.5" y2="139.4" stroke="#ffffff" stroke-width="1.0"/><line x1="1208.5" y1="133.3" x2="1208.5" y2="139.4" stroke="#ffffff" stroke-width="1.0"/><line x1="1045.5" y1="139.4" x2="1045.5" y2="230.0" stroke="#ffffff" stroke-width="1.0"/><line x1="1052.5" y1="139.4" x2="1052.5" y2="230.0" stroke="#ffffff" stroke-width="1.0"/><line x1="1060.5" y1="139.4" x2="1060.5" y2="230.0" stroke="#ffffff" stroke-width="1.0"/><line x1="1068.5" y1="139.4" x2="1068.5" y2="230.0" stroke="#ffffff" stroke-width="1.0"/><line x1="1076.5" y1="139.4" x2="1076.5" y2="230.0" stroke="#ffffff" stroke-width="1.0"/><line x1="1083.5" y1="139.4" x2="1083.5" y2="230.0" stroke="#ffffff" stroke-width="1.0"/><line x1="1091.5" y1="139.4" x2="1091.5" y2="230.0" stroke="#ffffff" stroke-width="1.0"/><line x1="1139.5" y1="139.4" x2="1139.5" y2="230.0" stroke="#ffffff" stroke-width="1.0"/><line x1="1188.5" y1="139.4" x2="1188.5" y2="230.0" stroke="#ffffff" stroke-width="1.0"/><line x1="1238.5" y1="139.4" x2="1238.5" y2="230.0" stroke="#ffffff" stroke-width="1.0"/><line x1="1245.5" y1="139.4" x2="1245.5" y2="230.0" stroke="#ffffff" stroke-width="1.0"/><line x1="1253.5" y1="139.4" x2="1253.5" y2="230.0" stroke="#ffffff" stroke-width="1.0"/><rect x="1037.5" y="240.5" width="223" height="111" fill="#284a44" stroke="#ffffff" stroke-width="1.2"/><line x1="1260.2" y1="240.0" x2="1260.2" y2="352.0" stroke="#ffffff" stroke-width="2.2"/><line x1="1097.5" y1="240.0" x2="1097.5" y2="331.5" stroke="#ffffff" stroke-width="1.0"/><line x1="1157.5" y1="240.0" x2="1157.5" y2="331.5" stroke="#ffffff" stroke-width="1.0"/><line x1="1215.5" y1="240.0" x2="1215.5" y2="330.4" stroke="#ffffff" stroke-width="1.0"/><line x1="1226.5" y1="240.0" x2="1226.5" y2="330.4" stroke="#ffffff" stroke-width="1.0"/><line x1="1243.5" y1="240.0" x2="1243.5" y2="330.4" stroke="#ffffff" stroke-width="1.0"/><line x1="1038.0" y1="306.5" x2="1157.5" y2="306.5" stroke="#ffffff" stroke-width="1.0"/><line x1="1038.0" y1="331.5" x2="1215.4" y2="331.5" stroke="#ffffff" stroke-width="1.0"/><line x1="1215.4" y1="330.5" x2="1261.0" y2="330.5" stroke="#ffffff" stroke-width="1.0"/><line x1="1157.5" y1="265.5" x2="1215.4" y2="265.5" stroke="#ffffff" stroke-width="1.0"/><line x1="1157.5" y1="290.5" x2="1215.4" y2="290.5" stroke="#ffffff" stroke-width="1.0"/><line x1="1157.5" y1="315.5" x2="1215.4" y2="315.5" stroke="#ffffff" stroke-width="1.0"/><line x1="1093.5" y1="331.5" x2="1093.5" y2="352.0" stroke="#ffffff" stroke-width="1.0"/><line x1="1148.5" y1="331.5" x2="1148.5" y2="352.0" stroke="#ffffff" stroke-width="1.0"/><line x1="1203.5" y1="331.5" x2="1203.5" y2="352.0" stroke="#ffffff" stroke-width="1.0"/><rect x="1037.5" y="362.5" width="223" height="111" fill="#284a44" stroke="#ffffff" stroke-width="1.2"/><line x1="1260.2" y1="362.0" x2="1260.2" y2="474.0" stroke="#ffffff" stroke-width="2.2"/><line x1="1241.5" y1="362.0" x2="1241.5" y2="453.0" stroke="#ffffff" stroke-width="1.0"/><line x1="1249.5" y1="362.0" x2="1249.5" y2="452.0" stroke="#ffffff" stroke-width="1.0"/><line x1="1038.0" y1="413.5" x2="1241.6" y2="413.5" stroke="#ffffff" stroke-width="1.0"/><line x1="1038.0" y1="453.5" x2="1241.6" y2="453.5" stroke="#ffffff" stroke-width="1.0"/><line x1="1241.6" y1="452.5" x2="1261.0" y2="452.5" stroke="#ffffff" stroke-width="1.0"/><line x1="1093.5" y1="453.0" x2="1093.5" y2="474.0" stroke="#ffffff" stroke-width="1.0"/><line x1="1148.5" y1="453.0" x2="1148.5" y2="474.0" stroke="#ffffff" stroke-width="1.0"/><line x1="1236.5" y1="453.0" x2="1236.5" y2="474.0" stroke="#ffffff" stroke-width="1.0"/><line x1="1244.5" y1="453.0" x2="1244.5" y2="474.0" stroke="#ffffff" stroke-width="1.0"/><line x1="1252.5" y1="453.0" x2="1252.5" y2="474.0" stroke="#ffffff" stroke-width="1.0"/><line x1="1236.5" y1="471.5" x2="1261.0" y2="471.5" stroke="#ffffff" stroke-width="1.0"/><rect x="1037.5" y="484.5" width="223" height="111" fill="#284a44" stroke="#ffffff" stroke-width="1.2"/><line x1="1260.2" y1="484.0" x2="1260.2" y2="596.0" stroke="#ffffff" stroke-width="2.2"/><line x1="1241.5" y1="484.0" x2="1241.5" y2="490.0" stroke="#ffffff" stroke-width="1.0"/><line x1="1247.5" y1="484.0" x2="1247.5" y2="490.0" stroke="#ffffff" stroke-width="1.0"/><line x1="1252.5" y1="484.0" x2="1252.5" y2="490.0" stroke="#ffffff" stroke-width="1.0"/><line x1="1257.5" y1="484.0" x2="1257.5" y2="490.0" stroke="#ffffff" stroke-width="1.0"/><g fill="#fff" stroke="#6a6a6a" stroke-width="4.6" stroke-linejoin="round" paint-order="stroke"><text x="1179" y="168.5" font-size="18.6" direction="rtl" textLength="61" lengthAdjust="spacingAndGlyphs">صابونی</text><text x="1136.8" y="193.8" font-size="19.8" textLength="24.6" lengthAdjust="spacingAndGlyphs">×1</text><text x="1179" y="290.5" font-size="18.6" direction="rtl" textLength="61" lengthAdjust="spacingAndGlyphs">صابونی</text><text x="1136.8" y="315.8" font-size="19.8" textLength="24.6" lengthAdjust="spacingAndGlyphs">×1</text><text x="1179" y="412.5" font-size="18.6" direction="rtl" textLength="61" lengthAdjust="spacingAndGlyphs">صابونی</text><text x="1136.8" y="437.8" font-size="19.8" textLength="24.6" lengthAdjust="spacingAndGlyphs">×1</text></g><rect x="1268.5" y="114.5" width="8" height="52" fill="#333" stroke="#6a6a6a" stroke-width="1"/></svg>
<div id="split2" class="abs"></div><div id="split" class="abs"></div>
<div id="info" class="abs"></div>
<div id="status" class="abs"></div>
<svg width="1280" height="680" viewBox="0 0 1280 680" style="z-index:20"><text x="1269.2" y="22" font-size="12.2" fill="#f2f2f2" direction="rtl" textLength="25.7" lengthAdjust="spacingAndGlyphs">پروژه</text><text x="1229.0" y="22" font-size="12.2" fill="#f2f2f2" direction="rtl" textLength="60.3" lengthAdjust="spacingAndGlyphs">نقشه برش</text><text x="1154.1" y="22" font-size="12.2" fill="#f2f2f2" direction="rtl" textLength="44.6" lengthAdjust="spacingAndGlyphs">تنظیمات</text><text x="1095.1" y="22" font-size="12.2" fill="#f2f2f2" direction="rtl" textLength="32.9" lengthAdjust="spacingAndGlyphs">راهنما</text><text x="1250.9" y="62.8" font-size="12.2" fill="#f2f2f2" direction="rtl" textLength="37.5" lengthAdjust="spacingAndGlyphs">داده ها</text><text x="1177.8" y="62.8" font-size="12.2" fill="#f2f2f2" direction="rtl" textLength="60.0" lengthAdjust="spacingAndGlyphs">نقشه برش</text><text x="1081.4" y="62.8" font-size="12.2" fill="#f2f2f2" direction="rtl" textLength="34.8" lengthAdjust="spacingAndGlyphs">گزارش</text><text x="547.7" y="95" font-size="10.2" fill="#f2f2f2" direction="rtl" textLength="49.2" lengthAdjust="spacingAndGlyphs">سایز چاپ</text><text x="663.9" y="95" font-size="10.2" fill="#f2f2f2" direction="rtl" textLength="47.1" lengthAdjust="spacingAndGlyphs">سایز متن</text><text x="783.3" y="95" font-size="10.2" fill="#f2f2f2" direction="rtl" textLength="78.2" lengthAdjust="spacingAndGlyphs">نمایش علامت ها</text><text x="907.5" y="95" font-size="10.2" fill="#f2f2f2" direction="rtl" textLength="82.2" lengthAdjust="spacingAndGlyphs">نمایش ابعاد اضافه</text><text x="1025.1" y="95" font-size="10.2" fill="#f2f2f2" direction="rtl" textLength="76.1" lengthAdjust="spacingAndGlyphs">طرح سیاه سفید</text><text x="1154.0" y="95" font-size="10.2" fill="#f2f2f2" direction="rtl" textLength="88.5" lengthAdjust="spacingAndGlyphs">نمایش شماره برش</text><text x="1271.4" y="95" font-size="10.2" fill="#f2f2f2" direction="rtl" textLength="74.9" lengthAdjust="spacingAndGlyphs">نمایش نام قطعه</text><text x="448.5" y="95" font-size="11.2" fill="#f0f0f0" textLength="13.4" lengthAdjust="spacingAndGlyphs">A4</text><text x="568.7" y="95.7" font-size="11.4" fill="#f0f0f0" textLength="13.0" lengthAdjust="spacingAndGlyphs">35</text><text x="27.7" y="129" font-size="9" fill="#111" textLength="59.0" lengthAdjust="spacingAndGlyphs">244 × 122 = 1</text><text x="1002.5" y="129" font-size="8.3" fill="#111" direction="rtl" textLength="125.5" lengthAdjust="spacingAndGlyphs">تست / صابونی / سفید کوچک / 1</text><text x="248.0" y="648" font-size="8.6" fill="#111" direction="rtl" textLength="40.5" lengthAdjust="spacingAndGlyphs">پرتی: ‪0.2%‬</text><text x="327.5" y="648" font-size="8.6" fill="#111" direction="rtl" textLength="68.0" lengthAdjust="spacingAndGlyphs">بهینه سازی: ‪99.8%‬</text><text x="393.0" y="648" font-size="8.6" fill="#111" direction="rtl" textLength="53.0" lengthAdjust="spacingAndGlyphs">تعداد برش: 25</text><text x="484.3" y="648" font-size="8.6" fill="#111" direction="rtl" textLength="79.3" lengthAdjust="spacingAndGlyphs">تعداد قطعات اضافه: 2</text><text x="557.8" y="648" font-size="8.6" fill="#111" direction="rtl" textLength="62.1" lengthAdjust="spacingAndGlyphs">تعداد قطعات: 23</text><text x="682.5" y="648" font-size="8.6" fill="#111" direction="rtl" textLength="112.5" lengthAdjust="spacingAndGlyphs">مساحت باقیمانده: 0.01 مترمربع</text><text x="822.8" y="648" font-size="8.6" fill="#111" direction="rtl" textLength="127.3" lengthAdjust="spacingAndGlyphs">مساحت استفاده شده: 2.82 مترمربع</text><text x="252.7" y="647.5" font-size="8.5" fill="#aaa">|</text><text x="333.2" y="647.5" font-size="8.5" fill="#aaa">|</text><text x="398.2" y="647.5" font-size="8.5" fill="#aaa">|</text><text x="489.1" y="647.5" font-size="8.5" fill="#aaa">|</text><text x="563.3" y="647.5" font-size="8.5" fill="#aaa">|</text><text x="688.4" y="647.5" font-size="8.5" fill="#aaa">|</text><text x="1269.2" y="510" font-size="11.5" fill="#02e6ac" direction="rtl" textLength="152.2" lengthAdjust="spacingAndGlyphs">متریال صابونی: چیدمان 1 از 20</text><text x="1269.2" y="532.9" font-size="11.5" fill="#ececec" direction="rtl" textLength="148.7" lengthAdjust="spacingAndGlyphs">قیمت قطعات چیدمان: 0 تومان</text><text x="1269.2" y="552" font-size="11.5" fill="#ececec" direction="rtl" textLength="176.4" lengthAdjust="spacingAndGlyphs">قیمت کل قطعات 1 چیدمان: 0 تومان</text><text x="1269.2" y="571.2" font-size="11.5" fill="#ececec" direction="rtl" textLength="182.7" lengthAdjust="spacingAndGlyphs">مجموع قیمت این متریال: 4737 تومان</text><text x="1269.2" y="590.4" font-size="11.5" fill="#ececec" direction="rtl" textLength="150.7" lengthAdjust="spacingAndGlyphs">تعداد صفحه استفاده شده: 20</text><text x="1269.2" y="609.6" font-size="11.5" fill="#ececec" direction="rtl" textLength="106.5" lengthAdjust="spacingAndGlyphs">تعداد کل قطعات: 337</text><text x="1269.2" y="628.8" font-size="11.5" fill="#ececec" direction="rtl" textLength="155.7" lengthAdjust="spacingAndGlyphs">تعداد قطعات چیدمان شده: 337</text><text x="1269.2" y="648" font-size="11.5" fill="#ececec" direction="rtl" textLength="121.7" lengthAdjust="spacingAndGlyphs">تعداد قطعات جا نشده: 0</text><text x="1269.2" y="672.5" font-size="11.2" fill="#ececec" direction="rtl" textLength="90.9" lengthAdjust="spacingAndGlyphs">پروژه بارگذاری شد</text><text x="12.1" y="673.7" font-size="12.1" fill="#f0f0f0" textLength="54.6" lengthAdjust="spacingAndGlyphs">1401/7/30</text><text x="75.5" y="673.2" font-size="12" fill="#f0f0f0">|</text><text x="86.5" y="673.7" font-size="12.1" fill="#f0f0f0" textLength="47.7" lengthAdjust="spacingAndGlyphs">15:26:52</text></svg>
<div id="frame" class="abs"></div>
</body></html>
